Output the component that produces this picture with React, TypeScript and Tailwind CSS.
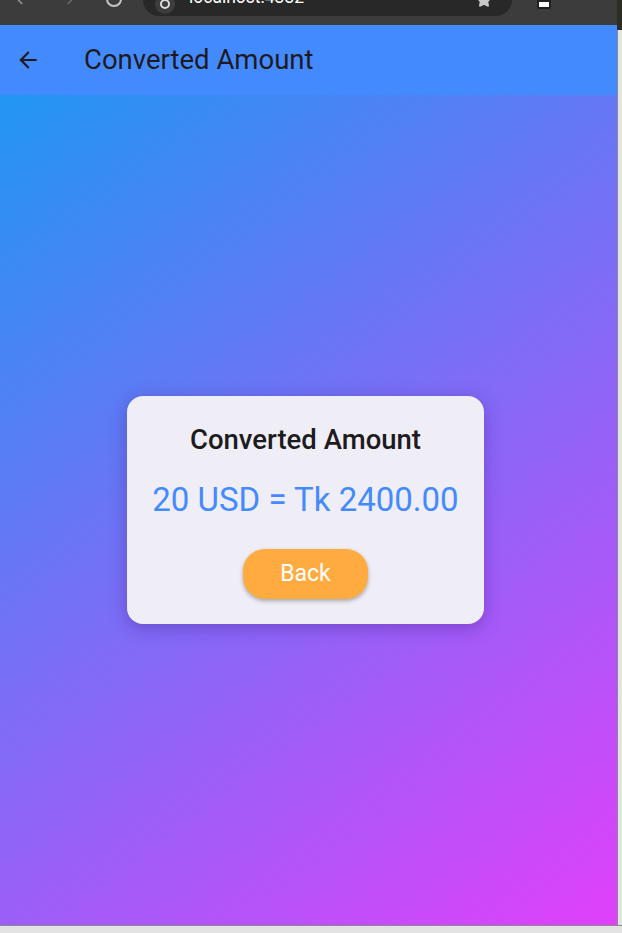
import { ArrowLeft, Star, MoreVertical } from 'lucide-react';

export default function App() {
  return (
    <div className="w-[622px] h-[933px] bg-[#e3e3e3] flex flex-col overflow-hidden" style={{ fontFamily: 'Roboto, "Noto Sans", sans-serif' }}>
      <div className="flex flex-1">
        {/* Browser window */}
        <div className="w-[617px] h-[925px] flex flex-col">
          {/* Browser toolbar (cut off) */}
          <div className="h-[25px] bg-[#3c3c3c] flex items-start overflow-hidden">
            <div className="w-[143px] flex items-start gap-[30px] pl-[14px] -mt-[9px] text-[#9e9e9e]">
              <ArrowLeft className="w-4 h-4" />
              <ArrowLeft className="w-4 h-4 rotate-180 opacity-50" />
              <div className="w-4 h-4 rounded-full border-2 border-[#c4c4c4]" />
            </div>
            <div className="w-[369px] h-[16px] bg-[#282828] rounded-b-[16px] flex items-start overflow-hidden pl-3 pr-5">
              <div className="w-[20px] h-[20px] -mt-[6px] rounded-full bg-[#3d3d3d] flex items-center justify-center">
                <div className="w-[10px] h-[10px] rounded-full border-2 border-[#dcdcdc]" />
              </div>
              <span className="ml-[14px] -mt-[11px] text-[17.5px] text-white leading-none">localhost:4332</span>
              <Star className="ml-auto -mt-[8px] w-[16px] h-[16px] text-[#c8c8c8] fill-[#c8c8c8]" />
            </div>
            <div className="flex-1 flex items-start justify-end gap-[30px] pr-[20px]">
              <div className="w-[14px] h-[9px] bg-white rounded-b-[2px] border-2 border-[#202020]" />
              <MoreVertical className="-mt-[14px] w-4 h-4 text-[#c8c8c8]" />
            </div>
          </div>

          {/* AppBar */}
          <div className="h-[70px] bg-[#448aff] flex items-center">
            <div className="w-[84px] pl-[15px] flex items-center">
              <svg viewBox="0 0 24 24" className="w-[26px] h-[26px]" fill="#1d1b20">
                <path d="M20 11H7.83l5.59-5.59L12 4l-8 8 8 8 1.41-1.41L7.83 13H20v-2z" />
              </svg>
            </div>
            <h1 className="text-[27.5px] text-[#1d1b20] leading-none">Converted Amount</h1>
          </div>

          {/* Body */}
          <div className="flex-1 bg-[linear-gradient(143.4deg,#2196f3,#e040fb)] flex items-center justify-center pr-[6px]">
            <div className="w-[357px] rounded-[16px] bg-[#efeef7] shadow-[0_4px_18px_rgba(60,20,120,0.35)] px-[25px] pt-[25px] pb-[25px] flex flex-col items-center">
              <h2 className="text-[27.5px] font-medium text-[#1d1b20] leading-[37px]">Converted Amount</h2>
              <p className="mt-[21px] text-[33px] text-[#448aff] leading-[41px]">20 USD = Tk 2400.00</p>
              <button className="mt-[29px] w-[125px] h-[50px] rounded-[22px] bg-[#ffab40] text-white text-[23px] shadow-[0_2px_4px_rgba(0,0,0,0.3)]">
                Back
              </button>
            </div>
          </div>
        </div>
        {/* Right edge */}
        <div className="w-[5px] flex flex-col">
          <div className="h-[30px] bg-[#2d2d22]" />
          <div className="flex-1 border-l border-[#8a8a8a] bg-[#e3e3e3]" />
        </div>
      </div>
      <div className="h-[8px] border-t border-[#8a8a8a]" />
    </div>
  );
}
